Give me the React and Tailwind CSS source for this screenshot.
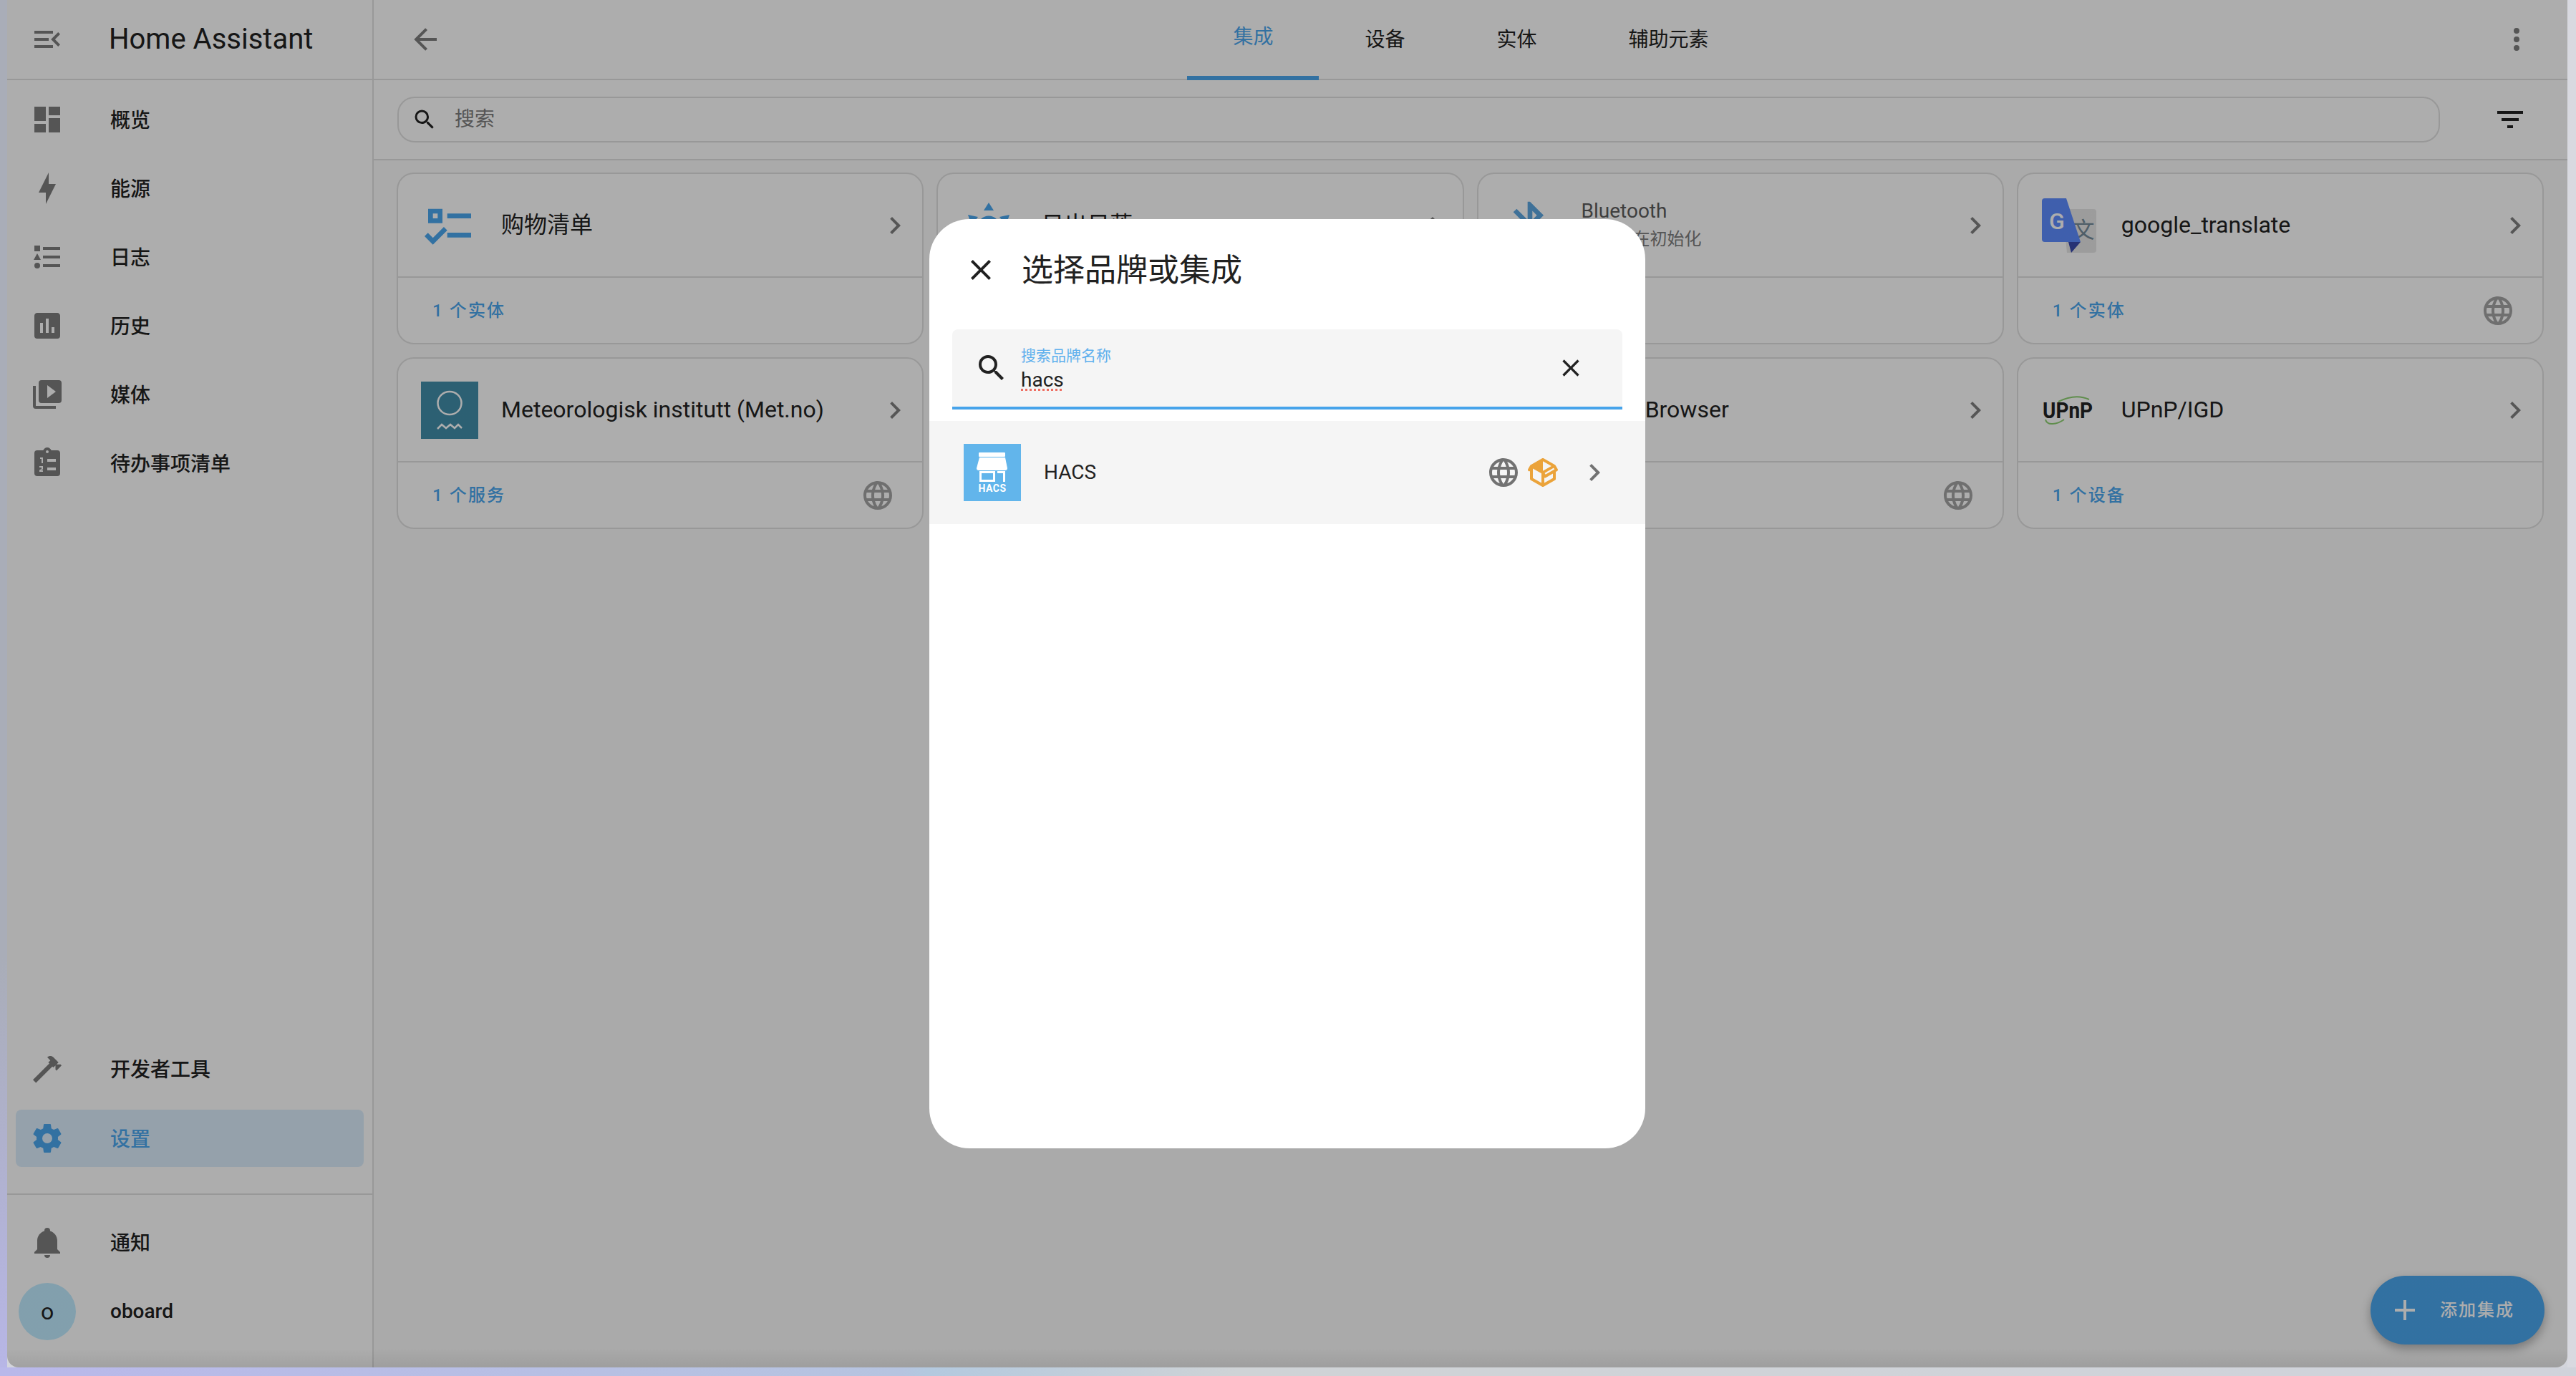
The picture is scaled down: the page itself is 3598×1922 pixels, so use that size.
import React from "react";

const mdi = {
    menuOpen: "M21,15.61L19.59,17L14.58,12L19.59,7L21,8.39L17.44,12L21,15.61M3,6H16V8H3V6M3,13V11H13V13H3M3,18V16H16V18H3Z",
    dashboard: "M13,3V9H21V3M13,21H21V11H13M3,21H11V15H3M3,13H11V3H3V13Z",
    bolt: "M11 15H6L13 1V9H18L11 23V15Z",
    listType: "M5,9.5L7.5,14H2.5L5,9.5M3,4H7V8H3V4M5,20A2,2 0 0,0 7,18A2,2 0 0,0 5,16A2,2 0 0,0 3,18A2,2 0 0,0 5,20M9,5V7H21V5H9M9,19H21V17H9V19M9,13H21V11H9V13Z",
    chartBox: "M19,3H5C3.89,3 3,3.89 3,5V19A2,2 0 0,0 5,21H19A2,2 0 0,0 21,19V5C21,3.89 20.1,3 19,3M9,17H7V10H9V17M13,17H11V7H13V17M17,17H15V13H17V17Z",
    media: "M4,6H2V20A2,2 0 0,0 4,22H18V20H4V6M20,2H8A2,2 0 0,0 6,4V16A2,2 0 0,0 8,18H20A2,2 0 0,0 22,16V4A2,2 0 0,0 20,2M12,14.5V5.5L18,10L12,14.5Z",
    todo: "M19,3H14.82C14.4,1.84 13.3,1 12,1C10.7,1 9.6,1.84 9.18,3H5A2,2 0 0,0 3,5V19A2,2 0 0,0 5,21H19A2,2 0 0,0 21,19V5A2,2 0 0,0 19,3M12,3A1,1 0 0,1 13,4A1,1 0 0,1 12,5A1,1 0 0,1 11,4A1,1 0 0,1 12,3M12,9H18V11H12V9M12,15H18V17H12V15M7,8H9V12H8V9H7V8M6.5,14H9V16.2L7.6,17H9V18H6.5V16.8L8,16V15H6.5V14Z",
    hammer: "M2 19.63L13.43 8.2L12.72 7.5L14.14 6.07L12 3.89C13.2 2.7 15.09 2.7 16.27 3.89L19.87 7.5L18.45 8.91H21.29L22 9.62L18.45 13.21L17.74 12.5V9.62L16.27 11.04L15.56 10.33L4.13 21.76L2 19.63Z",
    cog: "M12,15.5A3.5,3.5 0 0,1 8.5,12A3.5,3.5 0 0,1 12,8.5A3.5,3.5 0 0,1 15.5,12A3.5,3.5 0 0,1 12,15.5M19.43,12.97C19.47,12.65 19.5,12.33 19.5,12C19.5,11.67 19.47,11.34 19.43,11L21.54,9.37C21.73,9.22 21.78,8.95 21.66,8.73L19.66,5.27C19.54,5.05 19.27,4.96 19.05,5.05L16.56,6.05C16.04,5.66 15.5,5.32 14.87,5.07L14.5,2.42C14.46,2.18 14.25,2 14,2H10C9.75,2 9.54,2.18 9.5,2.42L9.13,5.07C8.5,5.32 7.96,5.66 7.44,6.05L4.95,5.05C4.73,4.96 4.46,5.05 4.34,5.27L2.34,8.73C2.21,8.95 2.27,9.22 2.46,9.37L4.57,11C4.53,11.34 4.5,11.67 4.5,12C4.5,12.33 4.53,12.65 4.57,12.97L2.46,14.63C2.27,14.78 2.21,15.05 2.34,15.27L4.34,18.73C4.46,18.95 4.73,19.03 4.95,18.95L7.44,17.94C7.96,18.34 8.5,18.68 9.13,18.93L9.5,21.58C9.54,21.82 9.75,22 10,22H14C14.25,22 14.46,21.82 14.5,21.58L14.87,18.93C15.5,18.67 16.04,18.34 16.56,17.94L19.05,18.95C19.27,19.03 19.54,18.95 19.66,18.73L21.66,15.27C21.78,15.05 21.73,14.78 21.54,14.63L19.43,12.97Z",
    bell: "M21,19V20H3V19L5,17V11C5,7.9 7.03,5.17 10,4.29C10,4.19 10,4.1 10,4A2,2 0 0,1 12,2A2,2 0 0,1 14,4C14,4.1 14,4.19 14,4.29C16.97,5.17 19,7.9 19,11V17L21,19M14,21A2,2 0 0,1 12,23A2,2 0 0,1 10,21",
    arrowLeft: "M20,11V13H8L13.5,18.5L12.08,19.92L4.16,12L12.08,4.08L13.5,5.5L8,11H20Z",
    dots: "M12,16A2,2 0 0,1 14,18A2,2 0 0,1 12,20A2,2 0 0,1 10,18A2,2 0 0,1 12,16M12,10A2,2 0 0,1 14,12A2,2 0 0,1 12,14A2,2 0 0,1 10,12A2,2 0 0,1 12,10M12,4A2,2 0 0,1 14,6A2,2 0 0,1 12,8A2,2 0 0,1 10,6A2,2 0 0,1 12,4Z",
    magnify: "M9.5,3A6.5,6.5 0 0,1 16,9.5C16,11.11 15.41,12.59 14.44,13.73L14.71,14H15.5L20.5,19L19,20.5L14,15.5V14.71L13.73,14.44C12.59,15.41 11.11,16 9.5,16A6.5,6.5 0 0,1 3,9.5A6.5,6.5 0 0,1 9.5,3M9.5,5C7,5 5,7 5,9.5C5,12 7,14 9.5,14C12,14 14,12 14,9.5C14,7 12,5 9.5,5Z",
    filter: "M6,13H18V11H6M3,6V8H21V6M10,18H14V16H10V18Z",
    chevron: "M8.59,16.58L13.17,12L8.59,7.41L10,6L16,12L10,18L8.59,16.58Z",
    close: "M19,6.41L17.59,5L12,10.59L6.41,5L5,6.41L10.59,12L5,17.59L6.41,19L12,13.41L17.59,19L19,17.59L13.41,12L19,6.41Z",
    plus: "M19,13H13V19H11V13H5V11H11V5H13V11H19V13Z",
    web: "M16.36,14C16.44,13.34 16.5,12.68 16.5,12C16.5,11.32 16.44,10.66 16.36,10H19.74C19.9,10.64 20,11.31 20,12C20,12.69 19.9,13.36 19.74,14M14.59,19.56C15.19,18.45 15.65,17.25 15.97,16H18.92C17.96,17.65 16.43,18.93 14.59,19.56M14.34,14H9.66C9.56,13.34 9.5,12.68 9.5,12C9.5,11.32 9.56,10.65 9.66,10H14.34C14.43,10.65 14.5,11.32 14.5,12C14.5,12.68 14.43,13.34 14.34,14M12,19.96C11.17,18.76 10.5,17.43 10.09,16H13.91C13.5,17.43 12.83,18.76 12,19.96M8,8H5.08C6.03,6.34 7.57,5.06 9.4,4.44C8.8,5.55 8.35,6.75 8,8M5.08,16H8C8.35,17.25 8.8,18.45 9.4,19.56C7.57,18.93 6.03,17.65 5.08,16M4.26,14C4.1,13.36 4,12.69 4,12C4,11.31 4.1,10.64 4.26,10H7.64C7.56,10.66 7.5,11.32 7.5,12C7.5,12.68 7.56,13.34 7.64,14M12,4.03C12.83,5.23 13.5,6.57 13.91,8H10.09C10.5,6.57 11.17,5.23 12,4.03M18.92,8H15.97C15.65,6.75 15.19,5.55 14.59,4.44C16.43,5.07 17.96,6.34 18.92,8M12,2C6.47,2 2,6.5 2,12A10,10 0 0,0 12,22A10,10 0 0,0 22,12A10,10 0 0,0 12,2Z",
    packageVariant: "M2,10.96C1.5,10.68 1.35,10.07 1.63,9.59L3.13,7C3.24,6.8 3.41,6.66 3.6,6.58L11.43,2.18C11.59,2.06 11.79,2 12,2C12.21,2 12.41,2.06 12.57,2.18L20.47,6.62C20.66,6.72 20.82,6.88 20.91,7.08L22.36,9.6C22.64,10.08 22.47,10.69 22,10.96L21,11.54V16.5C21,16.88 20.79,17.21 20.47,17.38L12.57,21.82C12.41,21.94 12.21,22 12,22C11.79,22 11.59,21.94 11.43,21.82L3.53,17.38C3.21,17.21 3,16.88 3,16.5V10.96C2.7,11.13 2.32,11.14 2,10.96M12,4.15V4.15L12,10.85V10.85L17.96,7.5L12,4.15M5,15.91L11,19.29V12.58L5,9.21V15.91M19,15.91V12.69L14,15.59C13.67,15.77 13.3,15.76 13,15.6V19.29L19,15.91M13.85,13.36L20.13,9.73L19.55,8.72L13.27,12.35L13.85,13.36Z",
    bluetooth: "M14.88,16.29L13,18.17V14.41M13,5.83L14.88,7.71L13,9.58M17.71,7.71L12,2H11V9.58L6.41,5L5,6.41L10.59,12L5,17.58L6.41,19L11,14.41V22H12L17.71,16.29L13.41,12L17.71,7.71Z",
    listChecks: "M3,5H9V11H3V5M5,7V9H7V7H5M11,7H21V9H11V7M11,15H21V17H11V15M5,20L1.5,16.5L2.91,15.09L5,17.17L9.59,12.59L11,14L5,20Z",
};

function Icon({ path, className = "w-[48px] h-[48px]", evenodd = false }) {
    return (
        <svg viewBox="0 0 24 24" className={`shrink-0 fill-current ${className}`}>
            <path d={path} fillRule={evenodd ? "evenodd" : "nonzero"} />
        </svg>
    );
}

function SunLogo() {
    return (
        <svg viewBox="0 0 80 80" className="w-[80px] h-[80px] shrink-0">
            <polygon points="39,8 46,19 32,19" fill="#4aa6ee" />
            <polygon points="10,25 24,28 15,40" fill="#4aa6ee" />
            <polygon points="68,25 54,28 63,40" fill="#4aa6ee" />
            <circle cx="39" cy="42" r="12" fill="none" stroke="#4aa6ee" strokeWidth="7" />
        </svg>
    );
}

function MetLogo() {
    return (
        <svg viewBox="0 0 80 80" className="w-[80px] h-[80px] shrink-0">
            <rect width="80" height="80" fill="#418da9" />
            <ellipse cx="40" cy="30" rx="16.5" ry="16" fill="none" stroke="#fff" strokeWidth="2.5" />
            <path d="M23 66 L29 60 L35 65 L41 60 L47 65 L52 60 L57 65" fill="none" stroke="#fff" strokeWidth="2.5" />
        </svg>
    );
}

function GoogleLogo() {
    return (
        <svg viewBox="0 0 80 80" className="w-[80px] h-[80px] shrink-0">
            <path d="M30 17 H73 A4 4 0 0 1 77 21 V74 A4 4 0 0 1 73 78 H36 Z" fill="#e6e6e6" />
            <text x="59" y="57" textAnchor="middle" fontSize="31" fill="#748b99" className="[font-family:'Noto_Sans_CJK_SC',sans-serif]">文</text>
            <polygon points="38,63 55,63 42,78" fill="#3949ab" />
            <path d="M5 2 H35 L55 63 H5 A4 4 0 0 1 1 59 V6 A4 4 0 0 1 5 2 Z" fill="#5d8cff" />
            <text x="22" y="45" textAnchor="middle" fontSize="32" fontWeight="500" fill="#fff">G</text>
        </svg>
    );
}

function UpnpLogo() {
    return (
        <svg viewBox="0 0 80 80" className="w-[80px] h-[80px] shrink-0">
            <path d="M24 28 C36 22 52 18 67 25" fill="none" stroke="#8cd070" strokeWidth="2" />
            <path d="M6 53 C8 62 22 60 32 53" fill="none" stroke="#8cd070" strokeWidth="2" />
            <text x="2" y="51" fontSize="32" fontWeight="700" fill="#222" textLength="70" lengthAdjust="spacingAndGlyphs">UPnP</text>
        </svg>
    );
}

function HacsLogo() {
    return (
        <svg viewBox="0 0 80 80" className="w-[80px] h-[80px] shrink-0">
            <rect width="80" height="80" fill="#62b5eb" />
            <rect x="21" y="12" width="37" height="6" rx="1" fill="#fff" />
            <path d="M22 19 H58 L61 34 Q61 37 58 37 H21 Q18 37 18 34 Z" fill="#fff" />
            <path d="M22 38 V53 H44 V38 Z M25 41 H41 V50 H25 Z" fill="#fff" fillRule="evenodd" />
            <path d="M47 38 H58 V53 H55 V41 H47 Z" fill="#fff" />
            <text x="40" y="67" textAnchor="middle" fontSize="14" fontWeight="700" fill="#fff" letterSpacing="0.5">HACS</text>
        </svg>
    );
}

const navTop = [
    { path: mdi.dashboard, label: "概览" },
    { path: mdi.bolt, label: "能源" },
    { path: mdi.listType, label: "日志" },
    { path: mdi.chartBox, label: "历史" },
    { path: mdi.media, label: "媒体" },
    { path: mdi.todo, label: "待办事项清单", evenodd: true },
];

const tabs = ["设备", "实体", "辅助元素"];

const cards = [
    { icon: <Icon path={mdi.listChecks} className="w-[80px] h-[80px] text-[#4aa6ee]" />, title: "购物清单", footer: "1 个实体" },
    { icon: <SunLogo />, title: "日出日落" },
    {
        icon: <Icon path={mdi.bluetooth} className="w-[80px] h-[80px] text-[#5da6e0]" />,
        title: "Bluetooth",
        sub: "集成正在初始化",
    },
    { icon: <GoogleLogo />, title: "google_translate", footer: "1 个实体", web: true },
    { icon: <MetLogo />, title: "Meteorologisk institutt (Met.no)", footer: "1 个服务", web: true },
    { icon: <div className="w-[80px] h-[80px] shrink-0" />, title: "" },
    { icon: <div className="w-[80px] h-[80px] shrink-0" />, title: "Radio Browser", web: true },
    { icon: <UpnpLogo />, title: "UPnP/IGD", footer: "1 个设备" },
];

function NavItem({ path, label, active, evenodd }) {
    return (
        <div className={`h-[80px] mx-[12px] pl-[20px] flex items-center rounded-[8px] ${active ? "bg-[#4aa6ee]/20" : ""}`}>
            <Icon path={path} evenodd={evenodd} className={`w-[48px] h-[48px] ${active ? "text-[#4aa6ee]" : "text-[#7d7d7d]"}`} />
            <span className={`ml-[64px] pt-[4px] text-[28px] font-medium ${active ? "text-[#4aa6ee]" : "text-[#212121]"}`}>{label}</span>
        </div>
    );
}

function Card({ card }) {
    return (
        <div className="h-[240px] bg-white border-2 border-[#e0e0e0] rounded-[24px] flex flex-col">
            <div className="h-[145px] pl-[32px] pr-[14px] flex items-center border-b-2 border-[#e0e0e0]">
                {card.icon}
                <div className="ml-[32px] flex-1 min-w-0">
                    {card.sub ? (
                        <>
                            <div className="text-[28px] leading-[38px] text-[#5c5c5c] mb-[1px]">{card.title}</div>
                            <div className="text-[24px] leading-[38px] text-[#7d7d7d]">{card.sub}</div>
                        </>
                    ) : (
                        <div className="pb-[2px] text-[32px] leading-[44px] text-[#212121] whitespace-nowrap">{card.title}</div>
                    )}
                </div>
                <Icon path={mdi.chevron} className="w-[48px] h-[48px] text-[#7f7f7f]" />
            </div>
            <div className="flex-1 pl-[48px] pr-[38px] flex items-center justify-between">
                <span className="text-[24px] tracking-[2.1px] font-medium text-[#4aa6ee]">{card.footer}</span>
                {card.web && <Icon path={mdi.web} className="w-[48px] h-[48px] text-[#a3a3a3]" />}
            </div>
        </div>
    );
}

function Sidebar() {
    return (
        <aside className="w-[512px] shrink-0 bg-white border-r-2 border-[#e0e0e0] flex flex-col">
            <div className="h-[112px] pl-[32px] flex items-center border-b-2 border-[#e0e0e0]">
                <Icon path={mdi.menuOpen} className="w-[48px] h-[48px] text-[#7d7d7d]" />
                <span className="ml-[62px] text-[40px] text-[#212121]">Home Assistant</span>
            </div>
            <nav className="flex-1 pt-[15px] flex flex-col gap-[16px]">
                {navTop.map((item) => (
                    <NavItem key={item.label} {...item} />
                ))}
                <div className="flex-1" />
            </nav>
            <div className="pb-[37px] flex flex-col gap-[17px] border-b-2 border-[#e0e0e0]">
                <NavItem path={mdi.hammer} label="开发者工具" />
                <NavItem path={mdi.cog} label="设置" active />
            </div>
            <div className="pt-[26px] pb-[38px] flex flex-col gap-[17px]">
                <NavItem path={mdi.bell} label="通知" />
                <div className="h-[80px] mx-[12px] pl-[4px] flex items-center">
                    <div className="w-[80px] h-[80px] rounded-full bg-[#bfebff] flex items-center justify-center text-[32px] text-[#212121]">o</div>
                    <span className="ml-[48px] text-[28px] font-medium text-[#212121]">oboard</span>
                </div>
            </div>
        </aside>
    );
}

function Main() {
    return (
        <main className="relative flex-1 min-w-0 bg-[#fafafa] flex flex-col">
            <div className="h-[112px] bg-white flex items-stretch border-b-2 border-[#e0e0e0]">
                <div className="flex-1 pl-[48px] flex items-center">
                    <Icon path={mdi.arrowLeft} className="w-[48px] h-[48px] text-[#7d7d7d]" />
                </div>
                <div className="flex h-[112px]">
                    <div className="px-[64px] flex items-center pb-[2px] text-[28px] text-[#4aa6ee] border-b-[6px] border-[#4aa6ee]">集成</div>
                    {tabs.map((tab) => (
                        <div key={tab} className="px-[64px] flex items-center text-[28px] text-[#212121]">{tab}</div>
                    ))}
                </div>
                <div className="flex-1 pr-[47px] flex items-center justify-end">
                    <Icon path={mdi.dots} className="w-[48px] h-[48px] text-[#7d7d7d]" />
                </div>
            </div>
            <div className="h-[112px] bg-white pl-[33px] pr-[56px] flex items-center border-b-2 border-[#e0e0e0]">
                <div className="flex-1 h-[64px] rounded-[24px] border-2 border-[#e0e0e0] pl-[18px] flex items-center">
                    <Icon path={mdi.magnify} className="w-[36px] h-[36px] text-[#212121]" />
                    <span className="ml-[24px] text-[28px] text-[#7d7d7d]">搜索</span>
                </div>
                <Icon path={mdi.filter} className="ml-[74px] w-[48px] h-[48px] text-[#212121]" />
            </div>
            <div className="pt-[17px] pl-[32px] pr-[33px] grid grid-cols-4 gap-[18px]">
                {cards.map((card, i) => (
                    <Card key={i} card={card} />
                ))}
            </div>
            {/* FAB */}
            <div className="absolute right-[32px] bottom-[32px] w-[243px] h-[96px] rounded-full bg-[#4aa6ee] shadow-[0_6px_14px_rgba(0,0,0,0.3)] pl-[24px] flex items-center text-white">
                <Icon path={mdi.plus} className="w-[48px] h-[48px]" />
                <span className="ml-[25px] text-[24px] tracking-[2px] font-medium whitespace-nowrap">添加集成</span>
            </div>
        </main>
    );
}

function Dialog() {
    return (
        <div className="w-[1000px] h-[1298px] bg-white rounded-[56px] overflow-hidden flex flex-col">
            <div className="h-[142px] pl-[48px] flex items-center shrink-0">
                <Icon path={mdi.close} className="w-[48px] h-[48px] text-[#212121]" />
                <span className="ml-[33px] pt-[2px] text-[44px] text-[#212121]">选择品牌或集成</span>
            </div>
            <div className="mt-[12px] mx-[32px] h-[112px] bg-[#f5f5f5] rounded-t-[8px] border-b-4 border-[#46a3ea] pl-[31px] pr-[52px] flex items-center shrink-0">
                <Icon path={mdi.magnify} className="w-[48px] h-[48px] text-[#212121]" />
                <div className="ml-[17px] pt-[4px] flex-1 flex flex-col">
                    <span className="text-[21px] leading-[26px] text-[#5fb0ed]">搜索品牌名称</span>
                    <span className="mt-[3px] text-[28px] leading-[36px] text-[#212121]">
                        <span className="underline decoration-dotted decoration-[3px] underline-offset-[3px] decoration-[#ee6f63]">hacs</span>
                    </span>
                </div>
                <Icon path={mdi.close} className="w-[40px] h-[40px] text-[#212121]" />
            </div>
            <div className="mt-[16px] h-[144px] bg-[#f5f5f5] pl-[48px] pr-[47px] flex items-center shrink-0">
                <HacsLogo />
                <span className="ml-[32px] flex-1 text-[28px] text-[#212121]">HACS</span>
                <Icon path={mdi.web} className="w-[48px] h-[48px] text-[#727272]" />
                <Icon path={mdi.packageVariant} className="ml-[7px] w-[48px] h-[48px] text-[#eba33a]" />
                <Icon path={mdi.chevron} className="ml-[24px] w-[48px] h-[48px] text-[#727272]" />
            </div>
        </div>
    );
}

export default function App() {
    return (
        <div className="w-[3598px] h-[1922px] overflow-hidden flex flex-col bg-[#d3d5dc] [font-family:Roboto,'Noto_Sans_CJK_SC',sans-serif]">
            <div className="flex h-[1910px]">
                <div className="w-[10px] bg-[linear-gradient(to_bottom,#a9adb8,#a9adb8_70%,#b7b6e6)]" />
                <div className="relative w-[3576px] flex rounded-b-[16px] overflow-hidden">
                    <Sidebar />
                    <Main />
                    {/* scrim + dialog */}
                    <div className="absolute inset-0 bg-[linear-gradient(to_top,rgba(0,0,0,0.37),rgba(0,0,0,0.32)_26px)] flex items-center justify-center">
                        <Dialog />
                    </div>
                </div>
                <div className="w-[12px] bg-[#d8d9e0]" />
            </div>
            <div className="h-[12px] bg-[linear-gradient(to_right,#b9b8ea,#b6c4e0_35%,#b3c9df_36%,#cfd3d6_48%,#d0d3db)]" />
        </div>
    );
}
